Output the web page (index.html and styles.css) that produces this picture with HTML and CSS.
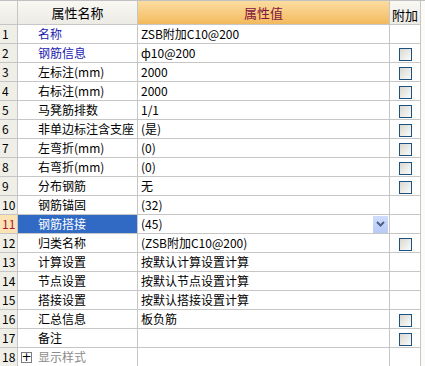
FILE: index.html
```html
<!DOCTYPE html>
<html>
<head>
<meta charset="utf-8">
<link rel="stylesheet" href="styles.css">
</head>
<body>
<div class="grid">
  <div class="hd num"></div>
  <div class="hd name">属性名称</div>
  <div class="hd val">属性值</div>
  <div class="hd add">附加</div>
  <div class="hd end"></div>

  <div class="num">1</div><div class="name blue">名称</div><div class="val">ZSB附加C10@200</div><div class="add"></div><div class="end"></div>
  <div class="num">2</div><div class="name blue">钢筋信息</div><div class="val">&#x444;10@200</div><div class="add"><span class="cb"></span></div><div class="end"></div>
  <div class="num">3</div><div class="name">左标注(mm)</div><div class="val">2000</div><div class="add"><span class="cb"></span></div><div class="end"></div>
  <div class="num">4</div><div class="name">右标注(mm)</div><div class="val">2000</div><div class="add"><span class="cb"></span></div><div class="end"></div>
  <div class="num">5</div><div class="name">马凳筋排数</div><div class="val">1/1</div><div class="add"><span class="cb"></span></div><div class="end"></div>
  <div class="num">6</div><div class="name">非单边标注含支座</div><div class="val">(是)</div><div class="add"><span class="cb"></span></div><div class="end"></div>
  <div class="num">7</div><div class="name">左弯折(mm)</div><div class="val">(0)</div><div class="add"><span class="cb"></span></div><div class="end"></div>
  <div class="num">8</div><div class="name">右弯折(mm)</div><div class="val">(0)</div><div class="add"><span class="cb"></span></div><div class="end"></div>
  <div class="num">9</div><div class="name">分布钢筋</div><div class="val">无</div><div class="add"><span class="cb"></span></div><div class="end"></div>
  <div class="num">10</div><div class="name">钢筋锚固</div><div class="val">(32)</div><div class="add"></div><div class="end"></div>
  <div class="num sel">11</div><div class="name selname">钢筋搭接</div><div class="val combo"><span>(45)</span><span class="drop"><svg width="9" height="6" viewBox="0 0 9 6"><path d="M1 1 L4.5 4.5 L8 1" fill="none" stroke="#4d6185" stroke-width="2"/></svg></span></div><div class="add"></div><div class="end"></div>
  <div class="num">12</div><div class="name">归类名称</div><div class="val">(ZSB附加C10@200)</div><div class="add"><span class="cb"></span></div><div class="end"></div>
  <div class="num">13</div><div class="name">计算设置</div><div class="val">按默认计算设置计算</div><div class="add"></div><div class="end"></div>
  <div class="num">14</div><div class="name">节点设置</div><div class="val">按默认节点设置计算</div><div class="add"></div><div class="end"></div>
  <div class="num">15</div><div class="name">搭接设置</div><div class="val">按默认搭接设置计算</div><div class="add"></div><div class="end"></div>
  <div class="num">16</div><div class="name">汇总信息</div><div class="val">板负筋</div><div class="add"><span class="cb"></span></div><div class="end"></div>
  <div class="num">17</div><div class="name">备注</div><div class="val"></div><div class="add"><span class="cb"></span></div><div class="end"></div>
  <div class="num">18</div><div class="name group"><span class="plus">+</span><span class="gray">显示样式</span></div><div class="val"></div><div class="add"></div><div class="end"></div>
</div>
</body>
</html>
```
FILE: styles.css
```css
html, body {
  margin: 0;
  padding: 0;
  background: #ffffff;
}
body {
  font-family: "Noto Sans CJK SC", "Liberation Sans", sans-serif;
  font-size: 12px;
  color: #000;
}
.grid {
  display: grid;
  grid-template-columns: 18px 120px 252px 31px 4px;
  grid-template-rows: 25px;
  grid-auto-rows: 19px;
  width: 425px;
}
.grid > div {
  box-sizing: border-box;
  border-bottom: 1px solid #c6c6c6;
  border-right: 1px solid #c6c6c6;
  display: flex;
  align-items: center;
  white-space: nowrap;
  overflow: hidden;
  line-height: 18px;
}
.grid > .end {
  border-right: none;
  border-bottom: none;
  background: #fbfbf9;
}
.grid > .hd {
  border-top: 1px solid #c0c0c0;
  background: linear-gradient(#f8f7f3, #ecebe4);
  justify-content: center;
  font-size: 13px;
}
.grid > .hd.end {
  border-top: 1px solid #c0c0c0;
  border-bottom: none;
  background: #fbfbf9;
}
.grid > .hd.val {
  background: linear-gradient(#fbdca0, #f6c573 70%, #f2b95c);
  color: #84123e;
  padding-left: 0;
}
.grid > .hd.add {
  padding: 0;
  justify-content: center;
}
.grid > .num {
  background: #efeee7;
  padding-left: 2px;
  font-size: 12px;
}
.grid > .hd.num {
  background: linear-gradient(#f8f7f3, #ecebe4);
}
.grid > .num.sel {
  background: #fde2b3;
  color: #a3163a;
}
.grid > .name {
  padding-left: 20px;
}
.grid > .hd.name {
  padding-left: 0;
}
.blue {
  color: #1a1ab0;
}
.grid > .selname {
  background: #316ac5;
  color: #ffffff;
}
.grid > .val {
  padding-left: 3px;
}
.grid > .combo {
  justify-content: space-between;
  padding-right: 0;
}
.drop {
  width: 15px;
  height: 17px;
  background: linear-gradient(#cfdcfc, #b8cbf6);
  display: flex;
  align-items: center;
  justify-content: center;
  margin-right: 1px;
}
.grid > .add {
  justify-content: center;
  align-items: flex-end;
  padding-left: 1px;
  padding-bottom: 1px;
}
.cb {
  display: block;
  width: 13px;
  height: 13px;
  box-sizing: border-box;
  border: 1px solid #1c5180;
  background: linear-gradient(135deg, #d9d9d3, #fafaf8);
}
.grid > .group {
  padding-left: 3px;
}
.plus {
  display: inline-flex;
  width: 11px;
  height: 11px;
  box-sizing: border-box;
  border: 1px solid #7d7d7d;
  background: #fff;
  align-items: center;
  justify-content: center;
  font-size: 12px;
  line-height: 9px;
  margin-right: 6px;
  font-family: "DejaVu Sans", sans-serif;
}
.gray {
  color: #8c8c8c;
}
```
